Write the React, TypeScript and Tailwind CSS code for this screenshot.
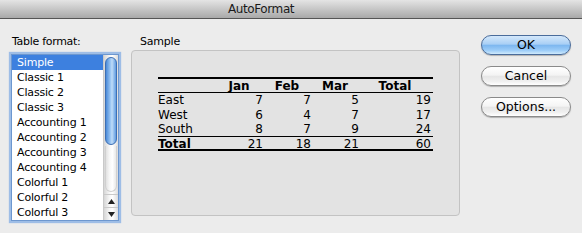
import React from "react";

const items = [
  "Simple",
  "Classic 1",
  "Classic 2",
  "Classic 3",
  "Accounting 1",
  "Accounting 2",
  "Accounting 3",
  "Accounting 4",
  "Colorful 1",
  "Colorful 2",
  "Colorful 3",
];

const rows: [string, number, number, number, number][] = [
  ["East", 7, 7, 5, 19],
  ["West", 6, 4, 7, 17],
  ["South", 8, 7, 9, 24],
];

function Row({ cells, h }: { cells: (string | number)[]; h: string }) {
  return (
    <div className={`grid grid-cols-[57px_48px_48px_48px_72px] items-center ${h}`}>
      {cells.map((c, i) => (
        <div key={i} className={i === 0 ? "text-left" : "text-right"}>
          {c}
        </div>
      ))}
    </div>
  );
}

function AquaButton({ label, primary }: { label: string; primary?: boolean }) {
  return (
    <div
      className={`h-[20px] w-[90px] rounded-full border flex items-center justify-center text-[12.5px] leading-none text-black shadow-[0_1px_1px_rgba(0,0,0,0.25)] ${
        primary
          ? "border-[#4a6c9b] bg-[linear-gradient(to_bottom,#d4e8fb_0%,#a9cff5_45%,#7db7f0_52%,#9dcdf8_80%,#cfeafd_100%)]"
          : "border-[#8a8a8a] bg-[linear-gradient(to_bottom,#ffffff_0%,#f4f4f4_45%,#e6e6e6_52%,#f0f0f0_80%,#ffffff_100%)]"
      }`}
    >
      {label}
    </div>
  );
}

export default function App() {
  return (
    <div className="w-[582px] h-[233px] bg-[#ececec] overflow-hidden font-['DejaVu_Sans',sans-serif] text-black">
      <div className="h-[19px] bg-[linear-gradient(to_bottom,#e4e4e4,#a9a9a9)] border-b border-[#555] flex items-center pl-[228px]">
        <span className="text-[12px] tracking-[-0.4px] text-[#1a1a1a] leading-none">AutoFormat</span>
      </div>
      <div className="flex pt-[16px] pl-[12px]">
        {/* left column */}
        <div className="w-[106px] flex flex-col">
          <div className="text-[11px] leading-[13px] h-[13px] tracking-[-0.3px]">Table format:</div>
          <div className="mt-[7px] h-[165px] bg-white flex shadow-[0_0_0_1px_#6d97cf,0_0_1px_3px_rgba(125,170,228,0.7)]">
            <div className="flex-1 flex flex-col text-[11px] tracking-[-0.2px]">
              {items.map((it, i) => (
                <div
                  key={it}
                  className={`h-[15px] leading-[15px] pl-[5px] ${i === 0 ? "bg-[#3d80df] text-white" : ""}`}
                >
                  {it}
                </div>
              ))}
            </div>
            <div className="w-[15px] flex flex-col border-l border-[#c9c9c9] bg-[linear-gradient(to_right,#d6d6d6,#f7f7f7_40%,#ffffff_60%,#dcdcdc)]">
              <div className="flex-1 flex flex-col pt-[2px] pb-[2px]">
                <div className="mx-[1px] h-[88px] rounded-full border border-[#3e6fb3] bg-[linear-gradient(to_right,#4a8ad8,#9dc7f3_45%,#bfdcf8_60%,#5f9ae0)]" />
                <div className="flex-1 mx-[1px] mt-[1px] rounded-b-full border border-t-0 border-[#d0d0d0]" />
              </div>
              <div className="h-[13px] border-t border-[#c9c9c9] flex items-center justify-center">
                <svg width="7" height="5" viewBox="0 0 7 5">
                  <polygon points="3.5,0 7,5 0,5" fill="#222" />
                </svg>
              </div>
              <div className="h-[13px] border-t border-[#c9c9c9] flex items-center justify-center">
                <svg width="7" height="5" viewBox="0 0 7 5">
                  <polygon points="0,0 7,0 3.5,5" fill="#222" />
                </svg>
              </div>
            </div>
          </div>
        </div>
        {/* sample */}
        <div className="ml-[13px] w-[329px] flex flex-col">
          <div className="text-[11px] leading-[13px] h-[13px] pl-[9px] tracking-[-0.2px]">Sample</div>
          <div className="mt-[2px] h-[166px] rounded-[4px] border border-[#c3c3c3] bg-[#e3e3e3] pl-[26px] pt-[26px]">
            <div className="w-[275px] text-[12px] leading-[14px]">
              <div className="border-t-2 border-black" />
              <div className="grid grid-cols-[57px_48px_48px_48px_72px] h-[14px] items-center font-bold border-b border-black">
                <div />
                <div className="text-center">Jan</div>
                <div className="text-center">Feb</div>
                <div className="text-center">Mar</div>
                <div className="text-center">Total</div>
              </div>
              <Row cells={rows[0]} h="h-[14px]" />
              <Row cells={rows[1]} h="h-[15px]" />
              <div className="border-b border-black">
                <Row cells={rows[2]} h="h-[14px]" />
              </div>
              <div className="grid grid-cols-[57px_48px_48px_48px_72px] h-[14px] items-center border-b-2 border-black">
                <div className="font-bold">Total</div>
                <div className="text-right">21</div>
                <div className="text-right">18</div>
                <div className="text-right">21</div>
                <div className="text-right">60</div>
              </div>
            </div>
          </div>
        </div>
        {/* buttons */}
        <div className="ml-[21px] flex flex-col gap-[11px]">
          <AquaButton label="OK" primary />
          <AquaButton label="Cancel" />
          <AquaButton label="Options..." />
        </div>
      </div>
    </div>
  );
}
